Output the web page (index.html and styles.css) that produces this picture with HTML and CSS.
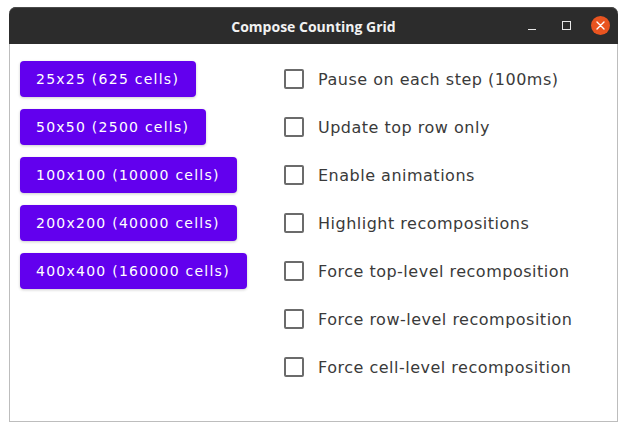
FILE: index.html
```html
<!DOCTYPE html>
<html>
<head>
<meta charset="utf-8">
<title>Compose Counting Grid</title>
<link rel="stylesheet" href="styles.css">
</head>
<body>
<div class="window">
  <div class="titlebar">
    <div class="spacer"></div>
    <div class="title">Compose Counting Grid</div>
    <div class="controls">
      <div class="ctl"><span class="min"></span></div>
      <div class="ctl"><span class="max"></span></div>
      <div class="ctl">
        <span class="close">
          <svg width="19" height="19" viewBox="0 0 19 19"><path d="M6 6 L13 13 M13 6 L6 13" stroke="#fff" stroke-width="1.4" stroke-linecap="round" fill="none"/></svg>
        </span>
      </div>
    </div>
  </div>
  <div class="content">
    <div class="buttons">
      <div class="btn-wrap"><button class="btn">25x25 (625 cells)</button></div>
      <div class="btn-wrap"><button class="btn">50x50 (2500 cells)</button></div>
      <div class="btn-wrap"><button class="btn">100x100 (10000 cells)</button></div>
      <div class="btn-wrap"><button class="btn">200x200 (40000 cells)</button></div>
      <div class="btn-wrap"><button class="btn">400x400 (160000 cells)</button></div>
    </div>
    <div class="options">
      <div class="opt"><span class="cb-wrap"><span class="cb"></span></span><span class="label">Pause on each step (100ms)</span></div>
      <div class="opt"><span class="cb-wrap"><span class="cb"></span></span><span class="label">Update top row only</span></div>
      <div class="opt"><span class="cb-wrap"><span class="cb"></span></span><span class="label">Enable animations</span></div>
      <div class="opt"><span class="cb-wrap"><span class="cb"></span></span><span class="label">Highlight recompositions</span></div>
      <div class="opt"><span class="cb-wrap"><span class="cb"></span></span><span class="label">Force top-level recomposition</span></div>
      <div class="opt"><span class="cb-wrap"><span class="cb"></span></span><span class="label">Force row-level recomposition</span></div>
      <div class="opt"><span class="cb-wrap"><span class="cb"></span></span><span class="label">Force cell-level recomposition</span></div>
    </div>
  </div>
</div>
</body>
</html>
```

FILE: styles.css
```css
html, body {
  margin: 0;
  padding: 0;
  background: #ffffff;
}

.window {
  margin: 7px 0 0 9px;
  width: 609px;
}

.titlebar {
  height: 37px;
  background: #2c2c2c;
  border-radius: 7px 7px 0 0;
  box-shadow: inset 0 1px 0 #4a4a4a;
  display: grid;
  grid-template-columns: 1fr auto 1fr;
  align-items: center;
}

.title {
  font-family: "Open Sans", "DejaVu Sans", sans-serif;
  font-weight: 700;
  font-size: 14px;
  color: #f2f2f2;
  padding-top: 1px;
}

.controls {
  display: flex;
  justify-content: flex-end;
  align-items: center;
  padding-right: 1px;
}

.ctl {
  width: 34px;
  height: 20px;
  display: flex;
  align-items: center;
  justify-content: center;
}

.min {
  width: 8px;
  height: 1px;
  background: #e8e8e8;
  margin-top: 7px;
}

.max {
  width: 7px;
  height: 7px;
  border: 1px solid #e8e8e8;
}

.close {
  width: 19px;
  height: 19px;
  border-radius: 50%;
  background: #e95420;
  display: block;
}

.close svg {
  display: block;
}

.content {
  box-sizing: border-box;
  height: 378px;
  border: 1px solid #bdbdbd;
  border-top: none;
  padding: 11px 10px 10px 10px;
  display: grid;
  grid-template-columns: 250px 1fr;
  align-content: start;
}

.buttons {
  display: flex;
  flex-direction: column;
  align-items: flex-start;
}

.btn-wrap {
  height: 48px;
  display: flex;
  align-items: center;
}

.btn {
  height: 36px;
  padding: 0 17px 0 16px;
  border: none;
  border-radius: 4px;
  background: #6200ee;
  color: #ffffff;
  font-family: "DejaVu Sans", sans-serif;
  font-size: 14px;
  letter-spacing: 1.25px;
  box-shadow: 0 1px 3px rgba(0, 0, 0, 0.2);
}

.options {
  display: flex;
  flex-direction: column;
}

.opt {
  height: 48px;
  display: flex;
  align-items: center;
}

.cb-wrap {
  width: 48px;
  height: 48px;
  display: flex;
  align-items: center;
  justify-content: center;
}

.cb {
  width: 16px;
  height: 16px;
  border: 2px solid #6b6b6b;
  border-radius: 2px;
}

.label {
  font-family: "DejaVu Sans", sans-serif;
  font-size: 16px;
  letter-spacing: 0.5px;
  color: #3a3a3a;
}
```
